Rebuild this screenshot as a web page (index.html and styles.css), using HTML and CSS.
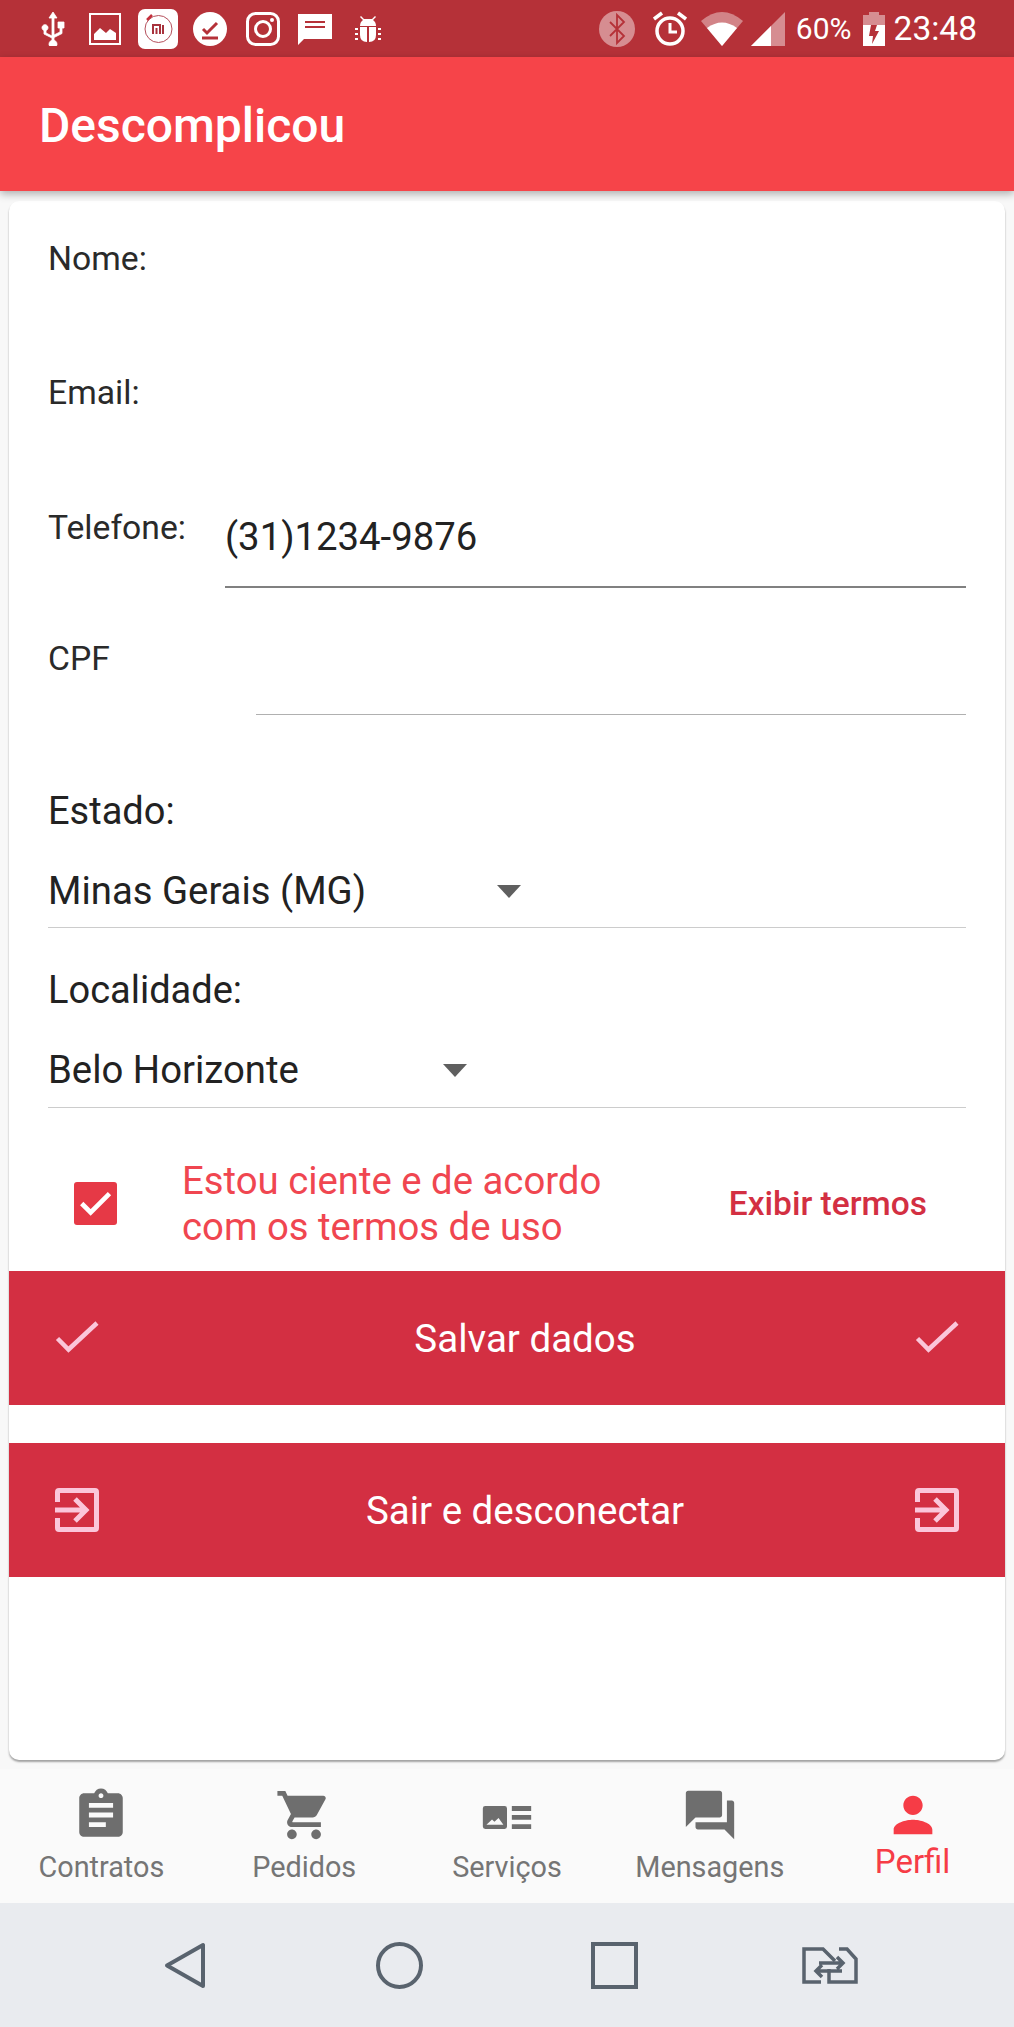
FILE: index.html
```html
<!DOCTYPE html>
<html lang="pt-BR">
  <head>
    <meta charset="UTF-8" />
    <meta name="viewport" content="width=device-width, initial-scale=1.0" />
    <title>Descomplicou</title>
    <link rel="stylesheet" href="styles.css">
  </head>
  <body>
    <div class="status-bar">
      <div class="status-left">
        <svg class="st-usb" viewBox="0 0 26 34"><path d="M13 0l4 6h-3v17l6-3v-4h-2v-6h6v6h-2v5.500l-8 4v2.700a4 4 0 1 1-2 0V26l-8-4v-3.500a3 3 0 1 1 2 0V21l6 3V6H9z" fill="#fff" stroke="#fff" stroke-width=".8"/></svg>
        <svg class="st-pic" viewBox="0 0 32 32"><path d="M0 0h32v32H0zM2 2v28h28V2z" fill="#fff"/><path d="M5 27V21l6-6 6 5 4-4 6 4v7z" fill="#fff"/></svg>
        <svg class="st-mi" viewBox="0 0 40 40"><rect width="40" height="40" rx="7" fill="#fff"/><circle cx="20.500" cy="20" r="13.500" fill="none" stroke="#b5505c" stroke-width="1"/><path d="M9 11l5-5" stroke="#c4303c" stroke-width="2.500"/><path d="M15 25v-9h7v9M18.500 19v6M25 16v9" fill="none" stroke="#a8323c" stroke-width="2"/></svg>
        <svg class="st-check" viewBox="0 0 34 34"><circle cx="17" cy="17" r="17" fill="#fff"/><path d="M10 17l4 4 10-10" fill="none" stroke="#b53138" stroke-width="3"/><path d="M9 26h16" stroke="#b53138" stroke-width="3"/></svg>
        <svg class="st-insta" viewBox="0 0 34 34"><rect x="1.500" y="1.500" width="31" height="31" rx="8" fill="none" stroke="#fff" stroke-width="3"/><circle cx="17" cy="17" r="7.500" fill="none" stroke="#fff" stroke-width="3"/><circle cx="26" cy="8" r="2" fill="#fff"/></svg>
        <svg class="st-msg" viewBox="0 0 34 32"><path d="M0 1h34v25H6l-6 6z" fill="#fff"/><path d="M7 9h20M7 14h20" stroke="#b53138" stroke-width="2"/></svg>
        <svg class="st-bug" viewBox="0 0 26 28"><path d="M6 1l3 3h8l3-3 1 1-3 3q3 2 3 6H5q0-4 3-6L5 2zM5 12h7v15q-7 0-7-7zM14 12h7v8q0 7-7 7z" fill="#fff"/><path d="M0 13h3v2H0zM23 13h3v2h-3zM0 18h3v2H0zM23 18h3v2h-3zM0 23h3v2H0zM23 23h3v2h-3z" fill="#fff"/></svg>
      </div>
      <div class="status-right">
        <svg class="st-bt" viewBox="0 0 36 36"><circle cx="18" cy="18" r="18" fill="#fff" opacity=".45"/><path d="M11 11l14 14-7 7V4l7 7-14 14" fill="none" stroke="#b53138" stroke-width="1.800"/></svg>
        <svg class="st-alarm" viewBox="0 0 34 36"><circle cx="17" cy="20" r="13" fill="none" stroke="#fff" stroke-width="3.500"/><path d="M17 12v9h7" fill="none" stroke="#fff" stroke-width="3"/><path d="M1 8l8-6M33 8l-8-6" stroke="#fff" stroke-width="3.500"/></svg>
        <svg class="st-wifi" viewBox="0 0 42 34"><path d="M21 34L0 9q21-18 42 0z" fill="#fff" opacity=".4"/><path d="M21 34L6 16q15-11 30 0z" fill="#fff"/></svg>
        <svg class="st-signal" viewBox="0 0 34 34"><path d="M0 34L34 0v34z" fill="#fff" opacity=".45"/><path d="M0 34l20-20v20z" fill="#fff"/></svg>
        <span class="st-percent">60%</span>
        <svg class="st-batt" viewBox="0 0 22 34"><path d="M6 0h10v3h6v11H0V3h6z" fill="#fff" opacity=".45"/><path d="M0 13h22v21H0z" fill="#fff"/><path d="M8 13l-2 11h4l-1 8 7-13h-4l2-6z" fill="#b53138"/></svg>
        <span class="st-time">23:48</span>
      </div>
    </div>

    <header class="app-bar">Descomplicou</header>

    <main class="card">
      <div class="field">
        <label class="field-label">Nome:</label>
      </div>
      <div class="field field-low">
        <label class="field-label">Email:</label>
      </div>
      <div class="field field-phone">
        <label class="field-label">Telefone:</label>
        <div class="field-input field-input-dark">(31)1234-9876</div>
      </div>
      <div class="field field-low">
        <label class="field-label">CPF</label>
        <div class="field-input field-input-cpf"></div>
      </div>

      <div class="picker picker-first">
        <div class="picker-label">Estado:</div>
        <div class="picker-value"><span>Minas Gerais (MG)</span><i class="arrow arrow-estado"></i></div>
      </div>
      <div class="picker">
        <div class="picker-label">Localidade:</div>
        <div class="picker-value"><span>Belo Horizonte</span><i class="arrow arrow-local"></i></div>
      </div>

      <div class="terms">
        <span class="terms-box">
          <svg viewBox="0 0 24 24"><path d="M4.300 12l5 5L19.800 6.500" fill="none" stroke="#fff" stroke-width="2.600"/></svg>
        </span>
        <p class="terms-text">Estou ciente e de acordo<br>com os termos de uso</p>
        <a class="terms-link">Exibir termos</a>
      </div>

      <button class="action action-save">
        <svg class="action-icon" viewBox="0 0 44 34"><path d="M2.500 17.500l11 11L42 2" fill="none" stroke="#fbc6da" stroke-width="4.500"/></svg>
        <span class="action-text">Salvar dados</span>
        <svg class="action-icon" viewBox="0 0 44 34"><path d="M2.500 17.500l11 11L42 2" fill="none" stroke="#fbc6da" stroke-width="4.500"/></svg>
      </button>
      <button class="action">
        <svg class="action-icon" viewBox="0 0 44 44"><path d="M2.500 14V4q0-1.500 1.500-1.500h36q1.500 0 1.500 1.500v36q0 1.500-1.500 1.500H4q-1.500 0-1.500-1.500V30M0 22h31M20 11l11 11-11 11" fill="none" stroke="#fbc6da" stroke-width="5"/></svg>
        <span class="action-text">Sair e desconectar</span>
        <svg class="action-icon" viewBox="0 0 44 44"><path d="M2.500 14V4q0-1.500 1.500-1.500h36q1.500 0 1.500 1.500v36q0 1.500-1.500 1.500H4q-1.500 0-1.500-1.500V30M0 22h31M20 11l11 11-11 11" fill="none" stroke="#fbc6da" stroke-width="5"/></svg>
      </button>
    </main>

    <nav class="tabs">
      <div class="tab">
        <svg viewBox="0 0 24 24"><path d="M19 3h-4.180C14.400 1.840 13.300 1 12 1c-1.300 0-2.400.84-2.820 2H5c-1.100 0-2 .9-2 2v14c0 1.100.9 2 2 2h14c1.100 0 2-.9 2-2V5c0-1.100-.9-2-2-2zm-7 0c.55 0 1 .45 1 1s-.45 1-1 1-1-.45-1-1 .45-1 1-1zm2 14H7v-2h7v2zm3-4H7v-2h10v2zm0-4H7V7h10v2z"/></svg>
        <span>Contratos</span>
      </div>
      <div class="tab">
        <svg viewBox="0 0 24 24"><path d="M7 18c-1.100 0-1.990.9-1.990 2S5.900 22 7 22s2-.9 2-2-.9-2-2-2zM1 2v2h2l3.600 7.590-1.350 2.450c-.16.28-.25.61-.25.96 0 1.100.9 2 2 2h12v-2H7.420c-.14 0-.25-.11-.25-.25l.03-.12.9-1.630h7.450c.75 0 1.410-.41 1.750-1.030l3.580-6.470c.08-.14.12-.31.12-.48 0-.55-.45-1-1-1H5.210l-.94-2H1zm16 16c-1.100 0-1.990.9-1.990 2s.89 2 1.990 2 2-.9 2-2-.9-2-2-2z"/></svg>
        <span>Pedidos</span>
      </div>
      <div class="tab">
        <svg viewBox="0 0 24 24"><path fill-rule="evenodd" d="M2 9.300q0-1 1-1h8q1 0 1 1v7.500q0 1-1 1H3q-1 0-1-1zM3.500 16h7L8.500 13.200l-1.700 1.600-1-.9z"/><path d="M14 8.300h8v2h-8zM14 12h8v2h-8zM14 15.800h8v2h-8z"/></svg>
        <span>Serviços</span>
      </div>
      <div class="tab">
        <svg viewBox="0 0 24 24"><path d="M21 6h-2v9H6v2c0 .55.45 1 1 1h11l4 4V7c0-.55-.45-1-1-1zm-4 6V3c0-.55-.45-1-1-1H3c-.55 0-1 .45-1 1v14l4-4h10c.55 0 1-.45 1-1z"/></svg>
        <span>Mensagens</span>
      </div>
      <div class="tab tab-active">
        <svg viewBox="0 0 24 24"><path d="M12 12c2.210 0 4-1.790 4-4s-1.790-4-4-4-4 1.790-4 4 1.790 4 4 4zm0 2c-2.670 0-8 1.340-8 4v2h16v-2c0-2.660-5.330-4-8-4z"/></svg>
        <span>Perfil</span>
      </div>
    </nav>

    <div class="system-nav">
      <svg class="sys-back" viewBox="0 0 42 47"><path d="M39 3v41L3 23.500z" fill="none" stroke="#59636e" stroke-width="4" stroke-linejoin="round"/></svg>
      <svg class="sys-home" viewBox="0 0 47 47"><circle cx="23.500" cy="23.500" r="21.500" fill="none" stroke="#59636e" stroke-width="4"/></svg>
      <svg class="sys-recent" viewBox="0 0 47 47"><rect x="2" y="2" width="43" height="43" fill="none" stroke="#59636e" stroke-width="4"/></svg>
      <svg class="sys-switch" viewBox="0 0 56 37"><path d="M19 35H2V2h19l12 12M37 2h8l9 10v23H27V22" fill="none" stroke="#59636e" stroke-width="3.500"/><path d="M17 16h24M35 10l6 6-6 6M40 24H14M20 18l-6 6 6 6" fill="none" stroke="#59636e" stroke-width="3.500"/></svg>
    </div>
  </body>
</html>
```

FILE: styles.css
```css
* {
  margin: 0;
  padding: 0;
  box-sizing: border-box;
}

body {
  width: 1014px;
  height: 2027px;
  background-color: #f8f8f8;
  color: #222;
  font-family: 'Roboto', sans-serif;
  overflow: hidden;
}

.status-bar {
  height: 57px;
  background-color: #b53138;
  color: #fff;
  display: flex;
  justify-content: space-between;
  align-items: center;
  padding: 0 37px 0 40px;
}

.status-left,
.status-right {
  display: flex;
  align-items: center;
}

.st-usb { width: 26px; height: 34px; margin-right: 23px; }
.st-pic { width: 32px; height: 32px; margin-right: 17px; }
.st-mi { width: 40px; height: 40px; margin-right: 15px; }
.st-check { width: 34px; height: 34px; margin-right: 19px; }
.st-insta { width: 34px; height: 34px; margin-right: 18px; }
.st-msg { width: 34px; height: 32px; margin-right: 23px; }
.st-bug { width: 26px; height: 28px; }

.st-bt { width: 36px; height: 36px; margin-right: 18px; }
.st-alarm { width: 34px; height: 36px; margin-right: 14px; }
.st-wifi { width: 42px; height: 34px; margin-right: 8px; }
.st-signal { width: 34px; height: 34px; margin-right: 11px; }
.st-percent { font-size: 30px; margin-right: 11px; }
.st-batt { width: 22px; height: 34px; margin-right: 9px; }
.st-time { font-size: 33.500px; }

.app-bar {
  height: 134px;
  background-color: #f64449;
  color: #fff;
  font-size: 48px;
  font-weight: 500;
  line-height: 138px;
  padding-left: 39px;
  box-shadow: 0 3px 8px rgba(0, 0, 0, 0.3);
  position: relative;
}

.card {
  margin: 10px 9px 0;
  height: 1559px;
  background: #fff;
  border-radius: 10px;
  box-shadow: 0 2px 2px rgba(0, 0, 0, 0.35);
}

.field {
  height: 133px;
  padding: 38px 0 0 39px;
  display: flex;
  position: relative;
}

.field-low {
  padding-top: 39px;
}

.field-phone {
  padding-top: 41px;
}

.field-label {
  font-size: 33.700px;
  line-height: 40px;
  color: #2a2a2a;
}

.field-input {
  position: absolute;
  left: 216px;
  right: 39px;
  top: 47px;
  height: 74px;
  font-size: 38.300px;
  line-height: 46px;
  border-bottom: 1px solid #b0b0b0;
}

.field-input-dark {
  border-bottom: 2px solid #808080;
}

.field-input-cpf {
  left: 247px;
  top: 0;
  height: 115px;
}

.picker {
  margin: 0 39px;
  height: 180px;
  padding-top: 39px;
  border-bottom: 1px solid #ccc;
}

.picker-first {
  height: 195px;
  padding-top: 55px;
}

.picker-label {
  font-size: 38px;
  line-height: 46px;
}

.picker-value {
  margin-top: 34px;
  display: flex;
  align-items: center;
  font-size: 38.300px;
  line-height: 46px;
}

.arrow {
  display: block;
  width: 0;
  height: 0;
  border-left: 12px solid transparent;
  border-right: 12px solid transparent;
  border-top: 13px solid #5f5f5f;
}

.arrow-estado { margin-left: 131px; }
.arrow-local { margin-left: 144px; }

.terms {
  height: 163px;
  display: flex;
  align-items: center;
  padding-top: 28px;
}

.terms-box {
  width: 43px;
  height: 43px;
  margin-left: 65px;
  background-color: #e63946;
  border-radius: 3px;
  flex-shrink: 0;
}

.terms-box svg {
  display: block;
  width: 43px;
  height: 43px;
}

.terms-text {
  margin-left: 65px;
  font-size: 38.300px;
  line-height: 46px;
  color: #f04650;
}

.terms-link {
  margin-left: auto;
  margin-right: 78px;
  font-size: 33.500px;
  font-weight: 500;
  color: #d32f42;
}

.action {
  width: 100%;
  height: 134px;
  margin-bottom: 38px;
  background-color: #d32f42;
  border: none;
  color: #fff;
  font-family: 'Roboto', sans-serif;
  font-size: 38.500px;
  display: flex;
  justify-content: space-between;
  align-items: center;
  padding: 0 46px;
}

.action-text {
  margin-left: 36px;
}

.action-icon {
  width: 44px;
  height: 44px;
}

.tabs {
  height: 134px;
  margin-top: 9px;
  background-color: #fafafa;
  display: flex;
}

.tab {
  width: 202.800px;
  display: flex;
  flex-direction: column;
  align-items: center;
  padding-top: 17px;
  color: #757575;
  font-size: 28.800px;
  line-height: 36px;
}

.tab svg {
  width: 58px;
  height: 58px;
  fill: #6e6e6e;
  margin-bottom: 5px;
}

.tab-active {
  color: #f63c46;
  font-size: 33px;
}

.tab-active svg {
  fill: #f63c46;
  margin-bottom: 0;
}

.system-nav {
  height: 125px;
  background-color: #e9ebef;
  display: flex;
  align-items: center;
  padding: 0 0 0 164px;
}

.sys-back { width: 42px; height: 47px; margin-right: 170px; }
.sys-home { width: 47px; height: 47px; margin-right: 168px; }
.sys-recent { width: 47px; height: 47px; margin-right: 164px; }
.sys-switch { width: 56px; height: 37px; }
```
